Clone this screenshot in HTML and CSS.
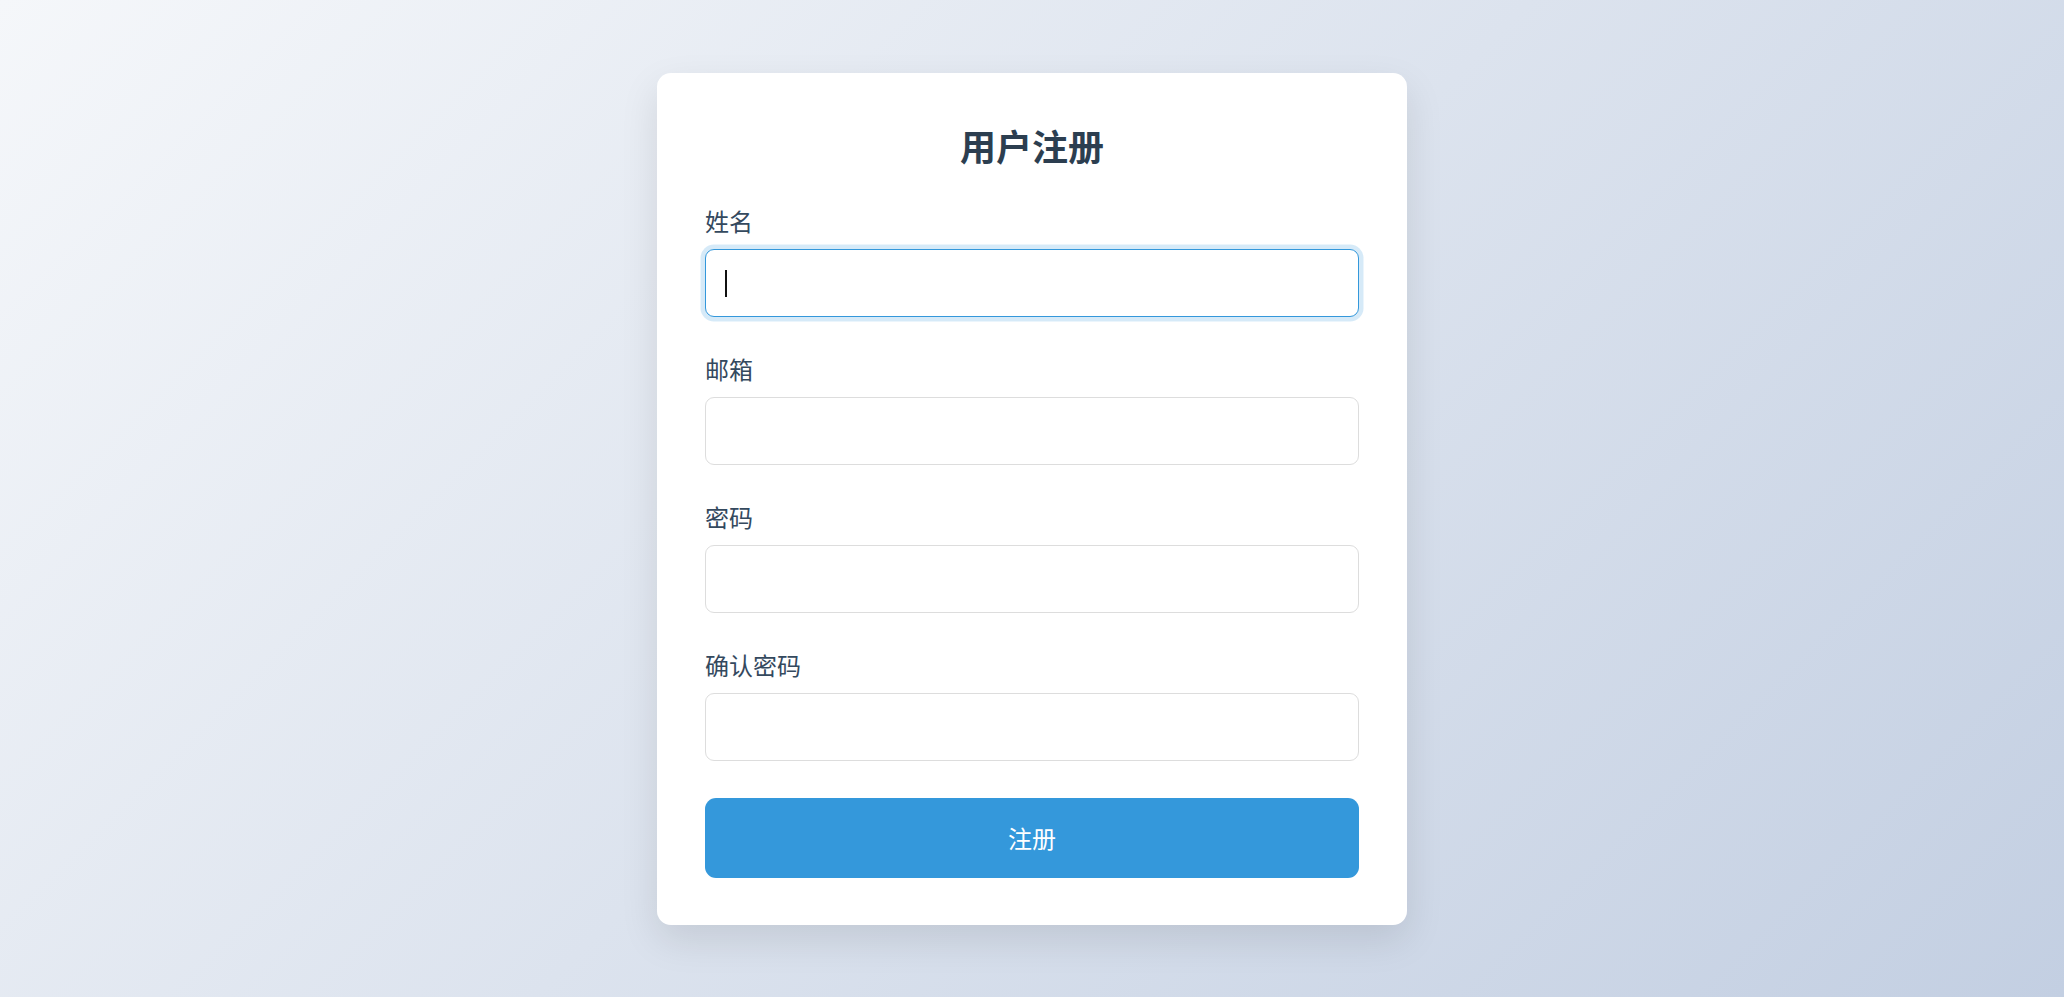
FILE: index.html
```html
<!DOCTYPE html>
<html lang="zh-CN">
<head>
<meta charset="utf-8">
<title>用户注册</title>
<link rel="stylesheet" href="styles.css">
</head>
<body>
<main class="page">
  <form class="card">
    <h1 class="title">用户注册</h1>
    <div class="group">
      <label class="label" for="name">姓名</label>
      <div class="field">
        <input class="input is-focused" id="name" type="text">
        <span class="caret"></span>
      </div>
    </div>
    <div class="group">
      <label class="label" for="email">邮箱</label>
      <div class="field"><input class="input" id="email" type="email"></div>
    </div>
    <div class="group">
      <label class="label" for="pwd">密码</label>
      <div class="field"><input class="input" id="pwd" type="password"></div>
    </div>
    <div class="group">
      <label class="label" for="pwd2">确认密码</label>
      <div class="field"><input class="input" id="pwd2" type="password"></div>
    </div>
    <button class="submit" type="button">注册</button>
  </form>
</main>
</body>
</html>
```
FILE: styles.css
```css
* { box-sizing: border-box; }
html, body {
  margin: 0;
  padding: 0;
}
body {
  font-family: "Noto Sans CJK SC", "Noto Sans", sans-serif;
  background: linear-gradient(135deg, #f5f7fa 0%, #c3cfe2 100%);
  min-height: 100vh;
}
.page {
  min-height: 100vh;
  display: flex;
  align-items: center;
  justify-content: center;
}
.card {
  width: 750px;
  background: #ffffff;
  border-radius: 14px;
  padding: 48px 48px 47px;
  box-shadow: 0 15px 38px rgba(0, 0, 0, 0.1);
  display: flex;
  flex-direction: column;
}
.title {
  margin: 0 0 34px;
  font-size: 36px;
  font-weight: 700;
  line-height: 48px;
  text-align: center;
  color: #2c3e50;
}
.group {
  display: flex;
  flex-direction: column;
  margin-bottom: 34px;
}
.label {
  font-size: 24px;
  line-height: 36px;
  color: #34495e;
  margin-bottom: 10px;
}
.field {
  position: relative;
}
.input {
  display: block;
  width: 100%;
  height: 68px;
  padding: 0 18px;
  font-family: inherit;
  font-size: 24px;
  border: 1.5px solid #dddddd;
  border-radius: 9px;
  background: #ffffff;
  outline: none;
}
.input.is-focused {
  border-color: #3498db;
  box-shadow: 0 0 0 4.5px rgba(52, 152, 219, 0.2);
}
.caret {
  position: absolute;
  left: 20px;
  top: 21px;
  width: 2px;
  height: 27px;
  background: #111111;
}
.submit {
  margin-top: 3px;
  height: 80px;
  width: 100%;
  border: none;
  border-radius: 11px;
  background: #3498db;
  color: #ffffff;
  font-family: inherit;
  font-size: 24px;
  cursor: pointer;
}
```
